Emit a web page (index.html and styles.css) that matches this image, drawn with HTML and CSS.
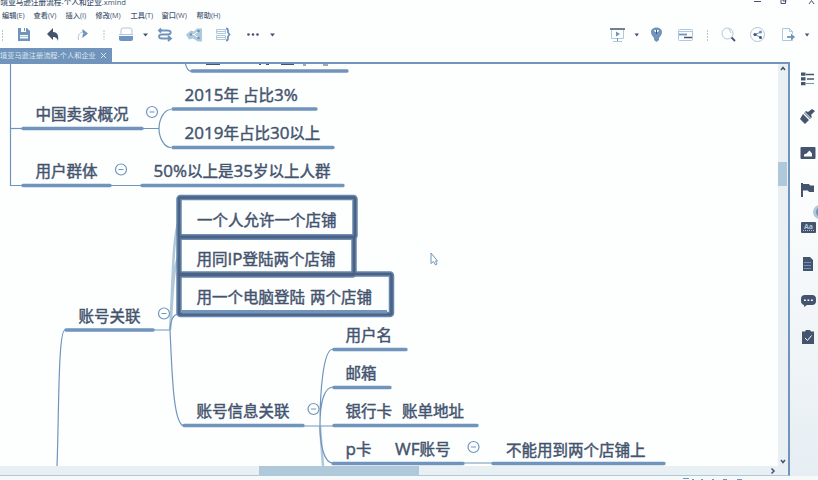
FILE: index.html
```html
<!DOCTYPE html>
<html lang="zh-CN">
<head>
<meta charset="utf-8">
<title>跨境亚马逊注册流程-个人和企业.xmind</title>
<link rel="stylesheet" href="styles.css">
</head>
<body>
<div class="app">
  <header class="titlebar">
    <span class="title">跨境亚马逊注册流程-个人和企业.xmind</span>
    <svg class="window-buttons" width="70" height="8" viewBox="748 0 70 8"><path d="M754 1.5h7"/><path d="M781 0v3.5h4.500V0M783 0v1h3.500"/><path d="M809 4l2.500-3.500L814 4"/></svg>
  </header>
  <nav class="menu">
    <span>编辑(E)</span><span>查看(V)</span><span>插入(I)</span><span>修改(M)</span><span>工具(T)</span><span>窗口(W)</span><span>帮助(H)</span>
  </nav>
  <div class="toolbar">
    <svg width="818" height="26" viewBox="0 22 818 26">
      <g class="light dotted"><path d="M2.500 30v11M104 30v10M707.500 30v12"/></g>
      <g>
        <path class="f-mid" d="M18 28h9l3 3v10H18z"/><path class="f-white" d="M21 28h5v4h-5zM20 35h8v4h-8z"/><path class="mid" d="M24.500 28v3"/><path class="light" d="M20 36.500h8M20 38.500h8"/>
        <path class="f-dark" d="M47 34l6-6v4c4 0 6 3 5 9-1-3-2-4-5-4v3z"/>
        <path class="light" d="M78.500 40c-1-6 2-8 5-8"/><path class="f-mid" d="M82.500 29l5.500 4.500-5.500 4.500v-3l1-1.500-1-1.500z"/>
        <path class="light" d="M121 34v-4q0-2 2-2h7q2 0 2 2v4"/><path class="light" d="M119 34.500h14"/><path class="f-mid" d="M119 36h14v3q0 2-2 2h-10q-2 0-2-2z"/>
        <path class="f-dark" d="M143 33.500h5l-2.500 3zM270 33.500h5l-2.500 3z"/>
        <path class="mid thick" d="M159 30.500h8c5 0 5 4 0 4h-5c-4 0-4 4 0 4h9M168 36l3 2.500-3 2.500M161 28.500l-2 2 2 2"/>
        <path class="f-light" d="M186 34.500l5-4 3 1 3-3h5v13h-4l-5-3-4 1z"/><path class="white" d="M191 34.500h3l4-3M194 34.500l4 3"/><circle class="f-mid" cx="191" cy="34.500" r="1.300"/><circle class="f-mid" cx="198.500" cy="31" r="1.300"/><circle class="f-mid" cx="198.500" cy="38" r="1.300"/>
        <path class="light" d="M216.500 29.500h9v4h-9zM216.500 35.500h9v4h-9zM217 31.500h8M217 37.500h8"/><path class="mid thick" d="M226 28.500q2 0 2 2v2l1.500 2-1.500 2v2q0 2-2 2"/>
        <circle class="f-dark" cx="248.500" cy="34.500" r="1.300"/><circle class="f-dark" cx="253" cy="34.500" r="1.300"/><circle class="f-dark" cx="257.500" cy="34.500" r="1.300"/>
      </g>
      <g>
        <path class="dark" d="M610 29h15"/><path class="light" d="M611.500 30v8.500h12V30M613 41.500h9"/><path class="mid" d="M617.500 38v3"/><path class="f-mid" d="M616 31.500l4 2.500-4 2.500z"/>
        <path class="f-dark" d="M634.500 33.500h4.500l-2.200 3zM804.800 33.500h4.500l-2.200 3z"/>
        <path class="f-mid" d="M651 32c0-6 11-6 11 0 0 3-2 4-3 6v2l-2.500 2-2.500-2v-2c-1-2-3-3-3-6z"/><path class="f-white" d="M654 30h5l-1 2h-3z"/><path class="f-dark" d="M656 30h1v4h-1z"/>
        <rect class="light" x="678.500" y="29.500" width="14" height="11" rx="1"/><path class="light" d="M679 31.500h13"/><path class="mid thick" d="M679 34.500h8"/><path class="dark" d="M684 37.500h8"/>
        <circle class="light" cx="727.500" cy="33.500" r="5.500"/><path class="light" d="M729 29l2 4"/><path class="dark thick" d="M731.500 37.500l3.500 3.500"/>
        <circle class="light" cx="757.500" cy="34.500" r="7"/><path class="mid" d="M761 32l-6 2.500 6 3"/><circle class="f-dark" cx="755" cy="34.500" r="1.600"/><circle class="f-mid" cx="760.500" cy="32" r="1.500"/><circle class="f-dark" cx="760.500" cy="37.500" r="1.500"/>
        <path class="light" d="M792.500 34v-2.500l-3-3h-7v12h10V39M789.500 28.500v3h3"/><path class="mid thick" d="M787 37h7"/><path class="f-mid" d="M791 33.500l4 3.500-4 3.500z"/>
      </g>
    </svg>
  </div>
  <div class="tabs"><div class="tab"><span>境亚马逊注册流程-个人和企业</span><svg width="7" height="7" viewBox="0 0 7 7"><path d="M1 1l5 5M6 1L1 6"/></svg></div></div>
  <main class="main">
    <section class="editor">
      <div class="editor-row">
        <svg class="map" width="778" height="402" viewBox="0 64 778 402">
          <g class="branch">
            <path d="M10.500 64V185.500H24M22 128.500H159M24 185.500H142"/>
            <path d="M10.500 128.500H24"/>
            <path d="M185.500 64c1 5 3 7 6 7.500"/>
            <path d="M171 109.500c-7 0-12 10-12 19s5 19 12 19"/>
            <path d="M57 466c2-50 1-136 8-136H170"/>
            <path class="soft" d="M170 330C173 290 172 240 179 220M170 330c3-28 2-60 9-75"/>
            <path d="M170 330c1-11 3-15 8-16M170 330c2 40 3 95 14 96H333"/>
            <path class="soft" d="M323 466l-3-40"/>
            <path d="M320 425c0-32 3-76 13-76M320 425c0-22 4-38 13-38M320 425c0 20 4 38 13 38H493"/>
          </g>
          <g class="underline">
            <path d="M192 71H347M173 109H316M173 147.500H333M23 128.500H142M23 185.500H110M142 185.500H343"/>
            <path d="M66 330H153M184 425.500H303M334 349.500H406M334 387.500H390M334 425.500H477M333 463.500H463M493 463.500H664"/>
          </g>
          <path class="clipped" d="M206 64.500h14M259 64.500h2M266 64.500h3M281 64.500h13M303 65h3M323 65h5"/>
          <g class="selected">
            <rect x="179" y="197.500" width="176" height="39.500" rx="1.500"/>
            <rect x="179" y="237" width="175" height="38" rx="1.500"/>
            <rect x="179" y="274" width="212.500" height="40.500" rx="1.500"/>
          </g>
          <g class="selected-core">
            <rect x="179" y="197.500" width="176" height="39.500" rx="1.500"/>
            <rect x="179" y="237" width="175" height="38" rx="1.500"/>
            <rect x="179" y="274" width="212.500" height="40.500" rx="1.500"/>
          </g>
          <path class="selected-base" d="M182 311.800H387"/>
          <g class="toggle">
            <circle cx="152" cy="112" r="5.500"/><circle cx="121" cy="169.500" r="5.500"/><circle cx="164" cy="313.500" r="5.500"/><circle cx="313.500" cy="409" r="5.500"/><circle cx="473.500" cy="447" r="5.500"/>
            <path d="M149.500 112h5M118.500 169.500h5M161.500 313.500h5M311 409h5M471 447h5"/>
          </g>
          <g class="topic">
            <text x="35.500" y="120">中国卖家概况</text>
            <text x="184.500" y="101"><tspan class="latin">2015</tspan>年 占比<tspan class="latin">3%</tspan></text>
            <text x="184.500" y="139"><tspan class="latin">2019</tspan>年占比<tspan class="latin">30</tspan>以上</text>
            <text x="35.500" y="177">用户群体</text>
            <text x="153.500" y="177"><tspan class="latin">50%</tspan>以上是<tspan class="latin">35</tspan>岁以上人群</text>
            <text x="197" y="226">一个人允许一个店铺</text>
            <text x="196.500" y="264.500">用同<tspan class="latin">IP</tspan>登陆两个店铺</text>
            <text x="196.500" y="302.500">用一个电脑登陆 <tspan dx="1">两个店铺</tspan></text>
            <text x="78.500" y="321.500">账号关联</text>
            <text x="196.500" y="417">账号信息关联</text>
            <text x="345.500" y="341">用户名</text>
            <text x="345.500" y="379">邮箱</text>
            <text x="345.500" y="417">银行卡</text><text x="402" y="417">账单地址</text>
            <text x="345.500" y="455">  <tspan class="latin">p</tspan>卡</text><text x="395" y="455"><tspan class="latin">WF</tspan>账号</text>
            <text x="506" y="455.500">不能用到两个店铺上</text>
          </g>
          <path class="cursor" d="M431 253v10.500l2.500-2 2 3.500 1.500-1-1.500-3h2z"/>
        </svg>
        <div class="vscroll"><svg width="10" height="402" viewBox="0 0 10 402"><path d="M3 6l2-2.500L7 6M3 396l2 2.500L7 396"/></svg><i></i></div>
      </div>
      <div class="hscroll"><i></i><svg width="6" height="8" viewBox="0 0 6 8"><path d="M1.500 1.500L4 4 1.500 6.500"/></svg></div>
    </section>
    <aside class="sidebar">
      <svg width="28" height="414" viewBox="790 62 28 414">
        <g class="f-dark">
          <path d="M801 72.500h4.500v3.200H801zM801 77.300h4.500v3.200H801zM801 82h4.500v3.200H801z"/>
          <path d="M812 109l3 2-4 4 1 2-2 2-6-6 2-2 2 1zM803 114l6 6-4 4-5-5z"/>
          <path d="M801.500 147h13q1 0 1 1v10q0 1-1 1h-13q-1 0-1-1v-10q0-1 1-1z"/>
          <path d="M801 183h2v14h-2zM803 184h6l1 1.500h4V192h-5l-1-1.500h-5z"/>
          <path d="M802 222h13q1 0 1 1v9q0 1-1 1h-13q-1 0-1-1v-9q0-1 1-1z"/>
          <path d="M803 257h7l3 3v11h-10z"/>
          <path d="M805 295h7q4 0 4 4v2q0 4-4 4h-5l-3 2v-2q-3-1-3-4v-2q0-4 4-4z"/>
          <path d="M802 331.500h3l1-1.500h4l1 1.500h3V344h-12z"/>
        </g>
        <path class="dark" d="M806 74.500h8M807 79h7"/><path class="mid" d="M806 83.500h8"/>
        <path class="f-white" d="M804 156.500v-2l2.500-1 3-3 2.500 3v3z"/>
        <path class="white" d="M804 111.500l6.500 6.500M805 338l2.500 2.500 4-5"/>
        <path class="light dotted-line" d="M803 230.500h11"/><text class="aa" x="804" y="228.500">Aa</text>
        <path class="mid" d="M804 262.500h7M804 265.500h7M804 268.500h7"/>
        <path class="f-white" d="M804 299.500h1.800v1.500H804zM807.500 299.500h1.800v1.500h-1.800zM811 299.500h1.800v1.500H811z"/>
        <circle class="f-light" cx="820" cy="212" r="7"/><circle class="f-mid" cx="821" cy="212" r="5"/>
      </svg>
    </aside>
  </main>
  <footer class="status"><svg width="80" height="4" viewBox="680 0 80 4"><path d="M683 2.500h6M692 3.500h2M701 3.500h2M712 3.500h2M723 3.500h4M737 3.500h5"/></svg></footer>
</div>
</body>
</html>
```
FILE: styles.css
```css
:root {
  --paper: #fdfefe;
  --light: #afc8da;
  --mid: #7094bc;
  --dark: #44546f;
  --haze: #e9f0f4;
}
* { box-sizing: border-box; }
body {
  margin: 0;
  background: var(--paper);
  color: var(--dark);
  font-family: "Open Sans", "Noto Sans CJK SC", sans-serif;
}
svg { display: block; fill: none; }
.app {
  display: flex;
  flex-direction: column;
  width: 818px;
  height: 480px;
  overflow: hidden;
}
.titlebar {
  display: flex;
  justify-content: space-between;
  height: 8px;
  flex: none;
}
.title {
  height: 8px;
  margin-left: -7px;
  margin-top: -3px;
  font-size: 7.600px;
  line-height: 10px;
  white-space: nowrap;
  font-weight: 500;
}
.window-buttons { stroke: var(--dark); }
.menu {
  display: grid;
  grid-template-columns: 31.500px 32px 30px 35px 31px 35px 30px;
  height: 14px;
  flex: none;
  padding-left: 2px;
  font-size: 7.200px;
  line-height: 14px;
  font-weight: 500;
  white-space: nowrap;
}
.toolbar { height: 26px; flex: none; }
.tabs { height: 14px; flex: none; }
.tab {
  display: flex;
  align-items: center;
  width: 112px;
  height: 14px;
  padding-top: 1px;
  background: var(--mid);
  color: #dce8ef;
  font-size: 7.200px;
  line-height: 13px;
  white-space: nowrap;
}
.tab span { width: 100px; }
.tab svg { stroke: #dce8ef; }
.main {
  display: flex;
  height: 414px;
  flex: none;
}
.editor {
  width: 790px;
  border-top: 2px solid var(--mid);
  border-right: 2px solid var(--mid);
  border-bottom: 1px solid var(--light);
}
.editor-row { display: flex; height: 402px; }
.vscroll {
  position: relative;
  width: 10px;
  background: var(--haze);
}
.vscroll svg, .hscroll svg { stroke: var(--dark); stroke-width: 1.500; }
.vscroll i {
  position: absolute;
  left: 0;
  top: 98px;
  width: 9px;
  height: 24px;
  background: var(--light);
}
.hscroll {
  display: flex;
  align-items: center;
  justify-content: space-between;
  height: 9px;
  padding: 0 12px 0 259px;
  background: var(--haze);
}
.hscroll i { width: 160px; height: 9px; background: var(--light); }
.sidebar {
  width: 28px;
  background: linear-gradient(#fdfefe 25%, #e6eef3);
}
.status { height: 4px; background: #f5f9fa; }
.status svg { margin-left: 680px; stroke: var(--mid); }

.light { stroke: var(--light); }
.mid { stroke: var(--mid); }
.dark { stroke: var(--dark); stroke-width: 1.500; }
.white { stroke: var(--paper); }
.thick { stroke-width: 1.800; }
.dotted path { stroke-dasharray: 2 1; }
.dotted-line { stroke-dasharray: 1 1; }
.f-light { fill: var(--light); }
.f-mid { fill: var(--mid); }
.f-dark { fill: var(--dark); }
.f-white { fill: var(--paper); }
.aa { fill: var(--light); font-size: 7px; font-weight: 700; }

.branch { stroke: var(--mid); stroke-width: 1.200; }
.branch .soft { stroke: var(--light); stroke-width: 2.500; }
.underline { stroke: var(--mid); stroke-width: 3.400; stroke-linecap: round; }
.clipped { stroke: var(--dark); }
.selected { stroke: #6687ae; stroke-width: 5.500; }
.selected-core { stroke: #4d6283; stroke-width: 2.600; }
.selected-base { stroke: var(--mid); stroke-width: 3.500; }
.toggle { stroke: var(--mid); stroke-width: 1.200; }
.toggle circle { fill: var(--paper); }
.topic {
  fill: var(--dark);
  font-size: 15.500px;
  font-weight: 400;
  stroke: var(--dark);
  stroke-width: 0.450;
}
.topic .latin { font-size: 17px; }
.cursor { fill: var(--paper); stroke: var(--mid); }
```
